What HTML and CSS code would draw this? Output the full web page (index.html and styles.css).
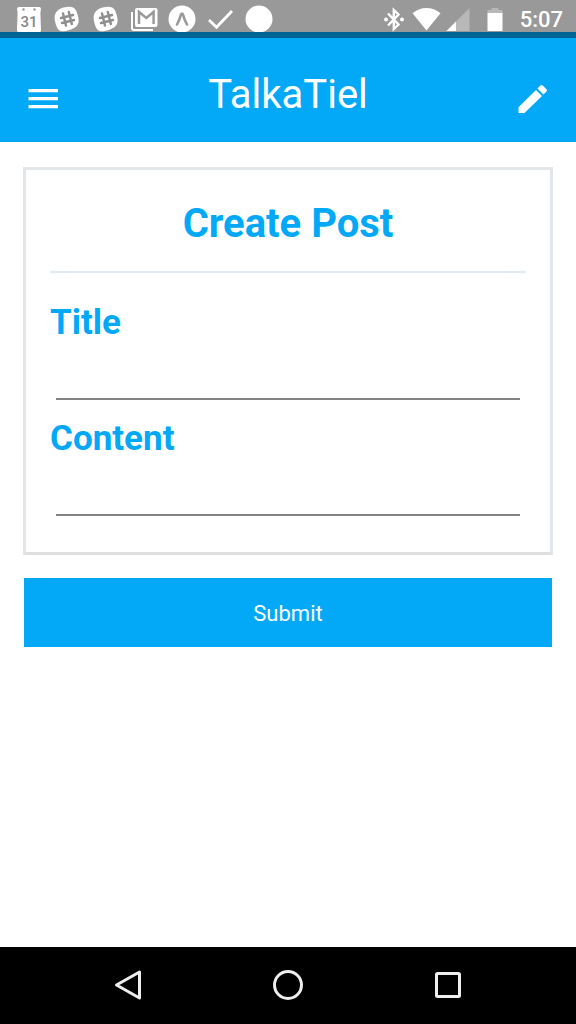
FILE: index.html
```html
<!DOCTYPE html>
<html lang="en">
<head>
<meta charset="utf-8">
<meta name="viewport" content="width=device-width, initial-scale=1">
<title>TalkaTiel</title>
<link rel="stylesheet" href="styles.css">
</head>
<body>
<div class="screen">
  <div class="status-bar">
    <div class="notifications">
      <svg class="note" viewBox="0 0 28 32" aria-hidden="true"><path fill="#fff" d="M4 7h20q2 0 2 2l-.6 3.500L26 30q0 2-1 2H3q-1 0-1-2l.6-17.500L2 9q0-2 2-2z"/><circle cx="8.500" cy="9.500" r="1.200" fill="#999"/><circle cx="19.500" cy="9.500" r="1.200" fill="#999"/><text class="note-day" x="14" y="27">31</text></svg>
      <svg class="note" viewBox="0 0 28 32" aria-hidden="true"><path fill="#fff" d="M10.500 7.400C17 6 21.500 6.200 23.500 11.500c3 8.500 4 14.500-5.500 18C9.500 32.500 5.500 32.500 3 25 .5 17 .5 10.500 10.500 7.400z"/><path fill="none" stroke="#8f8f8f" stroke-width="2.500" stroke-linecap="round" d="M10 13.500l3 12M15.800 12l3 12M8 18l12-3M9 23l12-3"/></svg>
      <svg class="note" viewBox="0 0 28 32" aria-hidden="true"><path fill="#fff" d="M10.500 7.400C17 6 21.500 6.200 23.500 11.500c3 8.500 4 14.500-5.500 18C9.500 32.500 5.500 32.500 3 25 .5 17 .5 10.500 10.500 7.400z"/><path fill="none" stroke="#8f8f8f" stroke-width="2.500" stroke-linecap="round" d="M10 13.500l3 12M15.800 12l3 12M8 18l12-3M9 23l12-3"/></svg>
      <svg class="note" viewBox="0 0 28 32" aria-hidden="true"><path fill="none" stroke="#fff" stroke-width="2" d="M2 12v16q0 2 2 2h19"/><rect x="5" y="8" width="22.500" height="19" rx="2" fill="#fff"/><path fill="none" stroke="#999" stroke-width="2.500" d="M9 24V12l7.300 6 7.300-6v12"/></svg>
      <svg class="note" viewBox="0 0 28 32" aria-hidden="true"><circle cx="14" cy="19" r="13.500" fill="#fff"/><path fill="none" stroke="#999" stroke-width="2.600" stroke-linecap="round" stroke-linejoin="round" d="M9 24.500Q12 19 13 14.500q1-2 2 0Q16 19 19 24.500"/></svg>
      <svg class="note" viewBox="0 0 28 32" aria-hidden="true"><path fill="none" stroke="#fff" stroke-width="2.800" d="M2 20l7.500 7.200L25 11"/></svg>
      <svg class="note" viewBox="0 0 28 32" aria-hidden="true"><circle cx="14" cy="19" r="13.500" fill="#fff"/></svg>
    </div>
    <div class="system">
      <svg class="bluetooth" viewBox="0 0 20 32" aria-hidden="true"><path fill="none" stroke="#fff" stroke-width="2.400" d="M4 13.500L14.500 24.500 9.800 29V10l4.700 4.500L4 25.500"/><circle cx="2" cy="19.500" r="2" fill="#fff"/><circle cx="18" cy="19.500" r="2" fill="#fff"/></svg>
      <svg class="wifi" viewBox="0 0 30 32" aria-hidden="true"><path fill="#fff" d="M.5 13.200Q7 8 14.500 8t14 5.200L14.500 30.500z"/></svg>
      <svg class="signal" viewBox="0 0 24 32" aria-hidden="true"><path fill="#b8b8b8" d="M23.500 8v23H.5z"/><path fill="#fff" d="M10 21.500V31H.5z"/></svg>
      <svg class="battery" viewBox="0 0 16 32" aria-hidden="true"><path fill="#b8b8b8" d="M4.500 8h7v2H15q.5 0 .5.500V14H.5v-3.500Q.5 10 1 10h3.500z"/><path fill="#fff" d="M.5 13h15v18H.5z"/></svg>
      <span class="clock">5:07</span>
    </div>
  </div>

  <header class="app-bar">
    <button class="icon-button" type="button" aria-label="Menu">
      <svg class="icon" viewBox="0 0 32 32"><path fill="#fff" d="M1.500 6H31v3.300H1.500zM1.500 14H31v3.300H1.500zM1.500 22H31v3.300H1.500z"/></svg>
    </button>
    <h1 class="app-title">TalkaTiel</h1>
    <button class="icon-button" type="button" aria-label="Write a post">
      <svg class="icon" viewBox="0 0 32 32"><path fill="#fff" d="M1.500 24.200V30h6L25 13 19 7zM29.500 8.500q1.200-1 0-2.200L25.700 2.500q-1.200-1.200-2.300 0L20.400 5.500l6 6z"/></svg>
    </button>
  </header>

  <main class="content">
    <form class="post-form">
      <section class="card">
        <h2 class="card-title">Create Post</h2>
        <label class="field-label" for="title">Title</label>
        <input class="field-input" id="title" type="text">
        <label class="field-label" for="content">Content</label>
        <input class="field-input" id="content" type="text">
      </section>
      <button class="submit" type="submit">Submit</button>
    </form>
  </main>

  <nav class="nav-bar" aria-label="System">
    <button class="nav-button" type="button" aria-label="Back"><svg class="icon" viewBox="0 0 32 32"><path fill="none" stroke="#eee" stroke-width="3" stroke-linejoin="round" d="M27.500 3v26L4.500 16z"/></svg></button>
    <button class="nav-button" type="button" aria-label="Home"><svg class="icon" viewBox="0 0 32 32"><circle cx="16" cy="16" r="13.500" fill="none" stroke="#eee" stroke-width="3"/></svg></button>
    <button class="nav-button" type="button" aria-label="Recent apps"><svg class="icon" viewBox="0 0 32 32"><rect x="4.500" y="4.500" width="23" height="23" rx="1" fill="none" stroke="#eee" stroke-width="3"/></svg></button>
  </nav>
</div>
</body>
</html>
```

FILE: styles.css
```css
* {
  box-sizing: border-box;
}

body {
  margin: 0;
  font-family: Roboto, sans-serif;
  background: #fff;
}

button,
input {
  font-family: inherit;
}

svg {
  display: block;
}

.screen {
  display: flex;
  flex-direction: column;
  min-height: 100vh;
}

.status-bar {
  display: flex;
  justify-content: space-between;
  padding: 0 13px 0 15px;
  background: #999;
  border-bottom: 6px solid #006594;
}

.notifications {
  display: flex;
  justify-content: space-between;
  width: 258px;
}

.note {
  width: 28px;
  height: 32px;
}

.note-day {
  font-size: 15px;
  font-weight: 500;
  fill: #888;
  text-anchor: middle;
}

.system {
  display: flex;
}

.bluetooth {
  width: 20px;
  height: 32px;
  margin-right: 8px;
}

.wifi {
  width: 30px;
  height: 32px;
  margin-right: 4px;
}

.signal {
  width: 24px;
  height: 32px;
  margin-right: 17px;
}

.battery {
  width: 16px;
  height: 32px;
  margin-right: 17px;
}

.clock {
  padding-top: 8px;
  color: #fff;
  font-size: 22px;
  font-weight: 500;
  line-height: 24px;
}

.app-bar {
  display: flex;
  align-items: center;
  justify-content: space-between;
  padding: 37px 27px 19px;
  background: #03a9f7;
}

.app-title {
  margin: 0;
  padding-bottom: 8px;
  color: #fff;
  font-size: 40px;
  font-weight: 400;
  line-height: 40px;
}

.icon-button,
.nav-button {
  padding: 0;
  border: 0;
  background: none;
}

.icon {
  width: 32px;
  height: 32px;
}

.content {
  flex: 1;
  padding: 25px 23px;
}

.card {
  padding: 24px 24px 23px;
  border: 3px solid #e4e7ea;
  border-bottom-color: #dddfe1;
}

.card-title {
  margin: 0 0 24px;
  padding: 6px 0 23px;
  border-bottom: 2px solid #e1e8ee;
  color: #03a9f7;
  font-size: 40px;
  font-weight: 700;
  line-height: 48px;
  text-align: center;
}

.field-label {
  display: block;
  padding: 6px 0 4px;
  color: #03a9f7;
  font-size: 35px;
  font-weight: 700;
  line-height: 40px;
}

.field-input {
  display: block;
  width: calc(100% - 12px);
  height: 53px;
  margin: 0 6px 13px;
  padding: 0;
  border: 0;
  border-bottom: 2px solid #838383;
  outline: 0;
  background: none;
  font-size: 28px;
}

.submit {
  display: block;
  width: calc(100% - 2px);
  height: 69px;
  margin: 23px 1px 0;
  padding: 2px 0 0;
  border: 0;
  background: #03a9f7;
  color: #fff;
  font-size: 22px;
}

.nav-bar {
  display: flex;
  justify-content: center;
  gap: 128px;
  padding: 22px 0 23px;
  background: #000;
}
```
